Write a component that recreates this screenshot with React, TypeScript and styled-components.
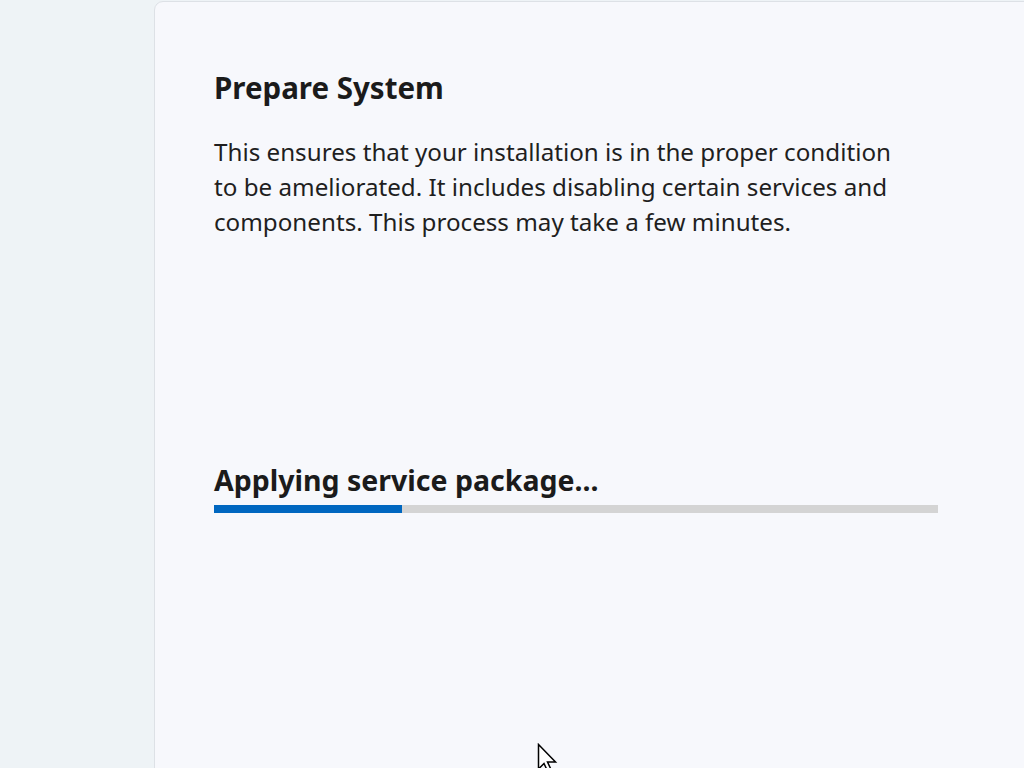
import React from "react";
import styled, { createGlobalStyle } from "styled-components";

const Global = createGlobalStyle`
  html, body { margin: 0; padding: 0; overflow: hidden; }
  body { background: #eef3f6; font-family: "Noto Sans", "Open Sans", sans-serif; }
`;

const Page = styled.div`
  width: 1024px;
  height: 768px;
  overflow: hidden;
  padding: 1px 0 0 154px;
  box-sizing: border-box;
  position: relative;
`;

const Card = styled.div`
  width: 900px;
  height: 800px;
  box-sizing: border-box;
  background: #f7f8fc;
  border: 1px solid #dde1e6;
  border-radius: 9px;
  padding: 64px 0 0 59px;
  display: flex;
  flex-direction: column;
`;

const Title = styled.h1`
  margin: 0;
  font-size: 29.5px;
  font-weight: 700;
  color: #1b1b1b;
  line-height: 44px;
`;

const Description = styled.p`
  margin: 24px 0 0;
  width: 700px;
  font-size: 24.2px;
  line-height: 35px;
  color: #1f1f1f;
`;

const Status = styled.div`
  margin-top: 221px;
  width: 724px;
  display: flex;
  flex-direction: column;
  gap: 5px;
`;

const StatusLabel = styled.div`
  font-size: 28.5px;
  font-weight: 700;
  color: #1b1b1b;
  line-height: 40px;
`;

const Track = styled.div`
  height: 8px;
  background: #d4d4d4;
  overflow: hidden;
`;

const Fill = styled.div`
  height: 100%;
  background: #0067c0;
`;

const Cursor = styled.svg`
  position: absolute;
  left: 537px;
  top: 743px;
`;

export default function App() {
  const progress = 188 / 724;
  return (
    <>
      <Global />
      <Page>
        <Card>
          <Title>Prepare System</Title>
          <Description>
            This ensures that your installation is in the proper condition to be ameliorated. It includes disabling certain services and components. This process may take a few minutes.
          </Description>
          <Status>
            <StatusLabel>Applying service package...</StatusLabel>
            <Track>
              <Fill style={{ width: `${progress * 100}%` }} />
            </Track>
          </Status>
        </Card>
        <Cursor width="24" height="30" viewBox="0 0 24 30">
          <path d="M1.5 1.5 L1.5 26 L7 20.5 L11 29 L14.5 27.5 L10.5 19 L18.5 19 Z" fill="#fff" stroke="#000" strokeWidth="1.5" strokeLinejoin="miter" />
        </Cursor>
      </Page>
    </>
  );
}
